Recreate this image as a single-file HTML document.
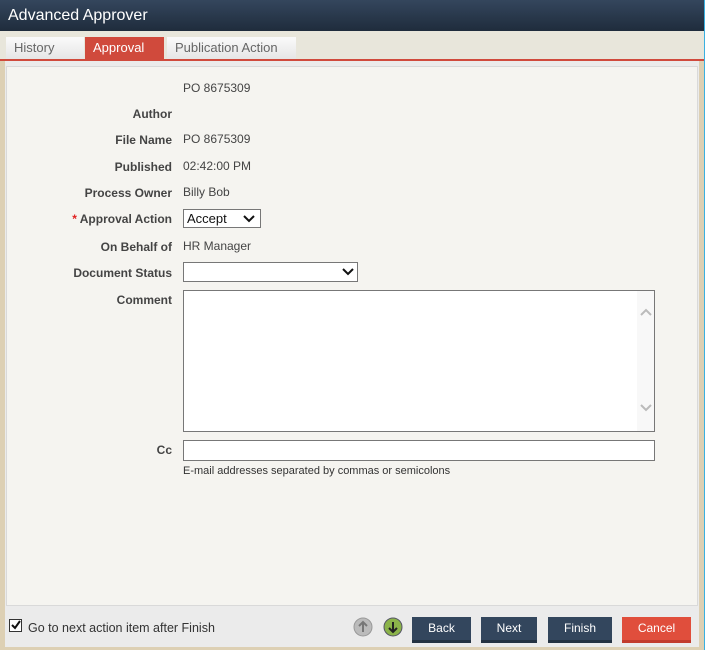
<!DOCTYPE html>
<html><head><style>
*{box-sizing:border-box;margin:0;padding:0}
body{width:705px;height:650px;overflow:hidden;background:#ddd0b4;font-family:"Liberation Sans",sans-serif;position:relative}
.hdr{position:absolute;left:0;top:0;width:705px;height:31px;background:linear-gradient(#34465d,#1f2c3c);color:#fff;font-size:16px;padding:7px 0 0 8px}
.tabbar{position:absolute;left:0;top:31px;width:704px;height:30px;background:#e8e6db}
.tab{position:absolute;top:6px;height:22px;font-size:13px;padding:3px 8px;color:#666;background:linear-gradient(#fafafa,#e6e6e6)}
.redline{position:absolute;left:0;top:59px;width:704px;height:2px;background:#d04a3c}
.main{position:absolute;left:5px;top:61px;width:694px;height:586px;background:#ebebeb}
.panel{position:absolute;left:6px;top:66px;width:692px;height:540px;background:#f5f4f0;border:1px solid #d9d9d9}
.lbl{position:absolute;right:533px;font-size:12px;font-weight:bold;color:#444;text-align:right;white-space:nowrap}
.val{position:absolute;left:183px;font-size:12px;color:#444}
.sel{position:absolute;background:#fff;border:1px solid #777;font-size:13px;color:#111;padding:1px 3px}
.btn{position:absolute;top:617px;height:26px;color:#fff;font-size:12px;text-align:center;line-height:23px;background:#33465d;border-bottom:3px solid #243242}
.rb{position:absolute;left:704px;top:0;width:1px;height:650px;background:#3ab0e0}
</style></head><body>
<div class="hdr">Advanced Approver</div>
<div class="tabbar">
<div class="tab" style="left:6px;width:78px">History</div>
<div class="tab" style="left:85px;width:79px;background:#d04a3c;color:#fff">Approval</div>
<div class="tab" style="left:167px;width:129px">Publication Action</div>
</div>
<div class="redline"></div>
<div class="main"></div>
<div class="panel"></div>
<div class="val" style="top:81px">PO 8675309</div>
<div class="lbl" style="top:107px">Author</div>
<div class="lbl" style="top:133px">File Name</div><div class="val" style="top:132px">PO 8675309</div>
<div class="lbl" style="top:160px">Published</div><div class="val" style="top:159px">02:42:00 PM</div>
<div class="lbl" style="top:186px">Process Owner</div><div class="val" style="top:185px">Billy Bob</div>
<div class="lbl" style="top:212px"><span style="color:#e02020">* </span>Approval Action</div>
<div class="sel" style="left:183px;top:209px;width:78px;height:19px;line-height:15px">Accept<svg style="position:absolute;right:5px;top:5px" width="12" height="8"><path d="M1 1l5 5 5-5" fill="none" stroke="#111" stroke-width="2"/></svg></div>
<div class="lbl" style="top:240px">On Behalf of</div><div class="val" style="top:239px">HR Manager</div>
<div class="lbl" style="top:266px">Document Status</div>
<div class="sel" style="left:183px;top:262px;width:175px;height:20px"><svg style="position:absolute;right:3px;top:5px" width="12" height="8"><path d="M1 1l5 5 5-5" fill="none" stroke="#111" stroke-width="2"/></svg></div>
<div class="lbl" style="top:293px">Comment</div>
<div class="sel" style="left:183px;top:290px;width:472px;height:142px"><div style="position:absolute;right:0;top:0;width:17px;height:140px;background:#f8f8f8"></div>
<svg style="position:absolute;right:2px;top:17px" width="12" height="8"><path d="M1 7l5-5 5 5" fill="none" stroke="#bbb" stroke-width="2"/></svg>
<svg style="position:absolute;right:2px;top:113px" width="12" height="8"><path d="M1 1l5 5 5-5" fill="none" stroke="#bbb" stroke-width="2"/></svg></div>
<div class="lbl" style="top:443px">Cc</div>
<div class="sel" style="left:183px;top:440px;width:472px;height:21px"></div>
<div class="val" style="top:465px;font-size:11px;color:#333">E-mail addresses separated by commas or semicolons</div>
<div style="position:absolute;left:9px;top:619px;width:13px;height:13px;border:1px solid #333;background:#fff"><svg width="11" height="11" style="position:absolute;left:0;top:0"><path d="M2 5l3 3 5-7" fill="none" stroke="#111" stroke-width="2"/></svg></div>
<div style="position:absolute;left:28px;top:621px;font-size:12.5px;color:#333">Go to next action item after Finish</div>
<svg style="position:absolute;left:353px;top:617px" width="20" height="20"><circle cx="10" cy="10" r="9" fill="#bbb" stroke="#999"/><path d="M10 15V6M6 9l4-4 4 4" fill="none" stroke="#777" stroke-width="2"/></svg>
<svg style="position:absolute;left:383px;top:617px" width="20" height="20"><circle cx="10" cy="10" r="9" fill="#8bb34a" stroke="#556"/><path d="M10 5v9M6 11l4 4 4-4" fill="none" stroke="#222" stroke-width="2"/></svg>
<div class="btn" style="left:412px;width:59px">Back</div>
<div class="btn" style="left:481px;width:56px">Next</div>
<div class="btn" style="left:548px;width:64px">Finish</div>
<div class="btn" style="left:622px;width:69px;background:#e04e3c;border-bottom-color:#c23b2c">Cancel</div>
<div class="rb"></div>
</body></html>
